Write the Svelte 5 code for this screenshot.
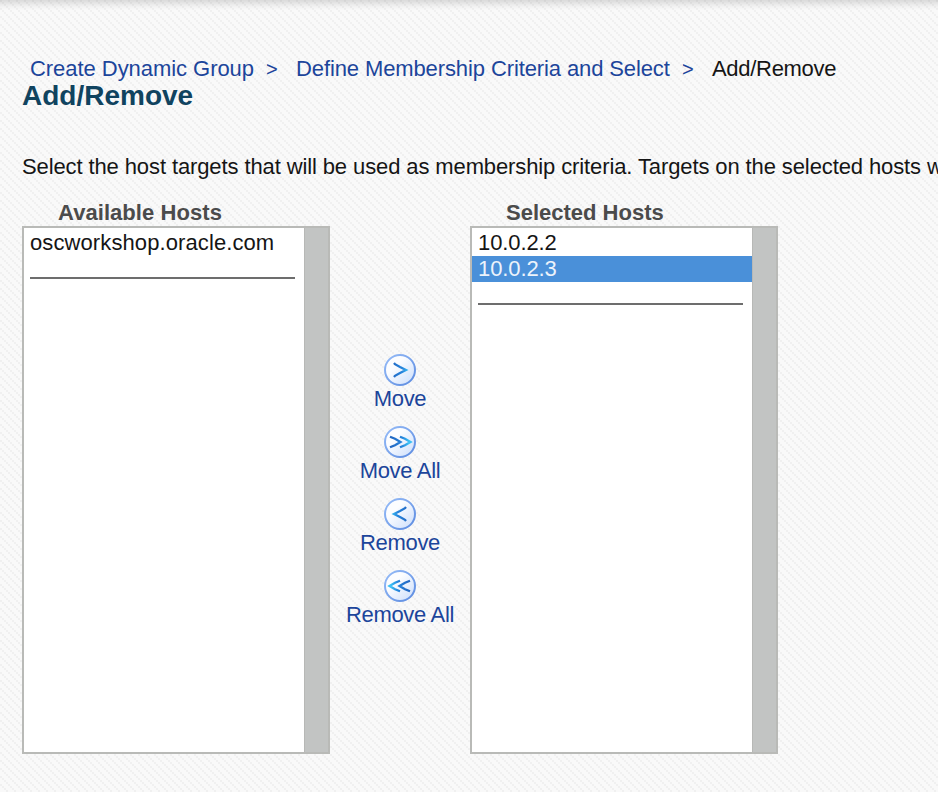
<script>
  const lists = [
    { title: 'Available Hosts', spacing: '0.06px', hosts: [{ name: 'oscworkshop.oracle.com', spacing: '0.1px' }] },
    { title: 'Selected Hosts', spacing: '0px', hosts: [{ name: '10.0.2.2' }, { name: '10.0.2.3', selected: true }] }
  ];
  const single = ['M-6 -7 L-5 -5.8 L0 -3 L6 0 L0 3 L-5 5.8 L-6 7'];
  const double = ['M-10 -5.3 L-5 -3.2 L0.5 0 L-5 3.2 L-10 5.3', 'M0 -5.3 L5 -3.2 L10.5 0 L5 3.2 L0 5.3'];
  const actions = [
    { label: 'Move', paths: single },
    { label: 'Move All', paths: double },
    { label: 'Remove', flip: true, paths: single },
    { label: 'Remove All', flip: true, paths: double }
  ];
</script>

{#snippet hostList(list)}
  <section class="list">
    <h2 style:letter-spacing={list.spacing}>{list.title}</h2>
    <div class="box">
      <div class="options">
        {#each list.hosts as host}
          <div class="option" class:selected={host.selected} style:letter-spacing={host.spacing}>{host.name}</div>
        {/each}
        <div class="rule"></div>
      </div>
      <div class="scroll"></div>
    </div>
  </section>
{/snippet}

<main>
  <nav>
    <a class="create">Create Dynamic Group</a><i>&gt;</i>
    <a class="define">Define Membership Criteria and Select</a><i>&gt;</i>
    <span>Add/Remove</span>
  </nav>
  <h1>Add/Remove</h1>
  <p>Select the host targets that will be used as membership criteria. Targets on the selected hosts w</p>
  <div class="shuttle">
    {@render hostList(lists[0])}
    <div class="actions">
      {#each actions as action, n}
        <a class="action">
          <svg width="34" height="34" viewBox="-17 -17 34 34">
            <defs>
              <linearGradient id="face{n}" x1="0" y1="0" x2="1" y2="1">
                <stop offset="0.35" stop-color="#fcfdff" /><stop offset="1" stop-color="#c9dcfb" />
              </linearGradient>
              <linearGradient id="ring{n}" x1="0" y1="0" x2="1" y2="1">
                <stop offset="0" stop-color="#96bcf8" /><stop offset="1" stop-color="#5c8be0" />
              </linearGradient>
              <linearGradient id="ink{n}" gradientUnits="userSpaceOnUse" x1="-8" y1="0" x2="9" y2="0">
                <stop offset="0" stop-color="#2369c4" /><stop offset="0.6" stop-color="#2584dc" /><stop offset="1" stop-color="#3bc0f5" />
              </linearGradient>
            </defs>
            <circle r="15" fill="url(#face{n})" stroke="url(#ring{n})" stroke-width="2" />
            <g transform={action.flip ? 'scale(-1 1)' : undefined}>
              {#each action.paths as d}
                <path {d} fill="none" stroke="url(#ink{n})" stroke-width="2.3" />
              {/each}
            </g>
          </svg>
          <b>{action.label}</b>
        </a>
      {/each}
    </div>
    {@render hostList(lists[1])}
  </div>
</main>

<style>
  :global(body) { overflow: hidden; }
  main {
    --dot: conic-gradient(from 0deg at 2px 2px, transparent 75%, #f0f0f0 0);
    box-sizing: border-box;
    width: 938px;
    height: 792px;
    overflow: hidden;
    padding: 56px 0 0 22px;
    font: 22px/26px "Liberation Sans", Arial, sans-serif;
    color: #151515;
    background:
      linear-gradient(#00000020, #00000009 6px, transparent 10px) top / 100% 10px no-repeat,
      var(--dot) 0 0 / 8px 8px,
      var(--dot) 2px 2px / 8px 8px,
      var(--dot) 4px 4px / 8px 8px,
      var(--dot) 6px 6px / 8px 8px,
      #f9f9f9;
  }
  nav { display: flex; height: 26px; padding-left: 8px; white-space: pre; }
  nav a, nav i, b { color: #1c459b; font-style: normal; font-weight: normal; }
  nav i { width: 42px; font-size: 20px; text-indent: 12px; line-height: 27px; }
  nav .create { width: 224px; letter-spacing: -0.05px; }
  nav .define { width: 374px; letter-spacing: -0.11px; }
  nav span { letter-spacing: -0.3px; }
  h1 { margin: 0; height: 32px; font-size: 28px; line-height: 28px; color: #10435f; }
  p { margin: 40px 0 0; height: 26px; white-space: nowrap; letter-spacing: -0.11px; }
  .shuttle { display: flex; margin-top: 20px; }
  .list { width: 308px; }
  h2 { margin: 0; height: 26px; padding-left: 36px; font-size: 22px; line-height: 26px; color: #4b4b4b; }
  .box { display: flex; box-sizing: border-box; height: 528px; border: 2px solid #b9bab7; background: #fff; }
  .options { flex: 1; padding-top: 2px; }
  .option { height: 26px; padding-left: 6px; line-height: 25px; letter-spacing: -0.1px; }
  .selected { color: #edf3fb; background: #4a90d9; }
  .rule { height: 2px; margin: 21px 9px 0 6px; background: #6d6d6d; }
  .scroll { width: 23px; border-left: 1px solid #b7b8b6; background: #c2c4c3; }
  .actions { width: 140px; padding-top: 153px; }
  .action { display: flex; flex-direction: column; align-items: center; height: 72px; }
  .action svg { flex: none; }
  b { height: 26px; margin-top: -1px; white-space: nowrap; letter-spacing: -0.32px; }
</style>
